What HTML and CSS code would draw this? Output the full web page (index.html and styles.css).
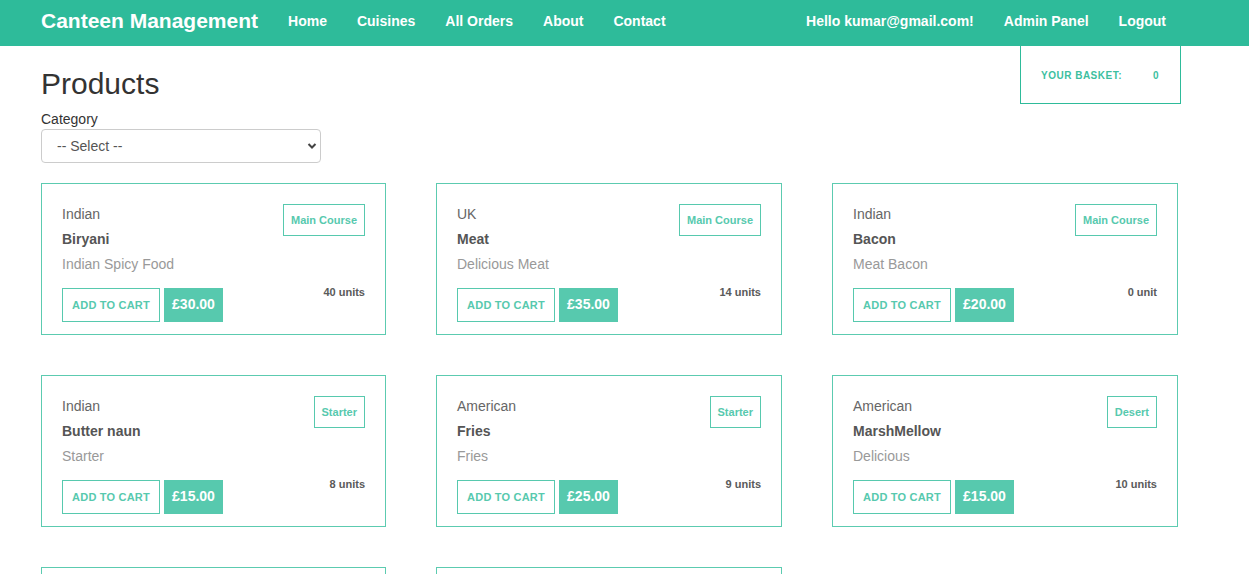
FILE: index.html
```html
<!DOCTYPE html>
<html lang="en">
<head>
<meta charset="utf-8">
<title>Canteen Management</title>
<link rel="stylesheet" href="styles.css">
</head>
<body>
<nav class="navbar">
  <div class="nav-inner">
    <a class="brand" href="#">Canteen Management</a>
    <ul class="nav-links">
      <li><a href="#">Home</a></li>
      <li><a href="#">Cuisines</a></li>
      <li><a href="#">All Orders</a></li>
      <li><a href="#">About</a></li>
      <li><a href="#">Contact</a></li>
    </ul>
    <ul class="nav-links nav-right">
      <li><a href="#">Hello kumar@gmail.com!</a></li>
      <li><a href="#">Admin Panel</a></li>
      <li><a href="#">Logout</a></li>
    </ul>
  </div>
</nav>

<main class="container">
  <div class="head-row">
    <div class="head-left">
      <h1 class="title">Products</h1>
      <label class="cat-label" for="cat">Category</label>
      <div class="select-wrap">
        <select id="cat" class="cat-select">
          <option>-- Select --</option>
        </select>
        <svg class="chev" width="10" height="8" viewBox="0 0 10 8"><path d="M1.5 2 L5 5.5 L8.5 2" fill="none" stroke="#444" stroke-width="2"/></svg>
      </div>
    </div>
    <div class="basket">
      <span>YOUR BASKET:</span>
      <span class="basket-count">0</span>
    </div>
  </div>

  <div class="grid">
    <div class="card">
      <div class="card-top">
        <div class="info">
          <div class="cuisine">Indian</div>
          <div class="name">Biryani</div>
          <div class="desc">Indian Spicy Food</div>
        </div>
        <span class="tag">Main Course</span>
      </div>
      <div class="card-bottom">
        <div class="actions">
          <button class="btn-cart">ADD TO CART</button>
          <span class="price">£30.00</span>
        </div>
        <span class="units">40 units</span>
      </div>
    </div>

    <div class="card">
      <div class="card-top">
        <div class="info">
          <div class="cuisine">UK</div>
          <div class="name">Meat</div>
          <div class="desc">Delicious Meat</div>
        </div>
        <span class="tag">Main Course</span>
      </div>
      <div class="card-bottom">
        <div class="actions">
          <button class="btn-cart">ADD TO CART</button>
          <span class="price">£35.00</span>
        </div>
        <span class="units">14 units</span>
      </div>
    </div>

    <div class="card">
      <div class="card-top">
        <div class="info">
          <div class="cuisine">Indian</div>
          <div class="name">Bacon</div>
          <div class="desc">Meat Bacon</div>
        </div>
        <span class="tag">Main Course</span>
      </div>
      <div class="card-bottom">
        <div class="actions">
          <button class="btn-cart">ADD TO CART</button>
          <span class="price">£20.00</span>
        </div>
        <span class="units">0 unit</span>
      </div>
    </div>

    <div class="card">
      <div class="card-top">
        <div class="info">
          <div class="cuisine">Indian</div>
          <div class="name">Butter naun</div>
          <div class="desc">Starter</div>
        </div>
        <span class="tag">Starter</span>
      </div>
      <div class="card-bottom">
        <div class="actions">
          <button class="btn-cart">ADD TO CART</button>
          <span class="price">£15.00</span>
        </div>
        <span class="units">8 units</span>
      </div>
    </div>

    <div class="card">
      <div class="card-top">
        <div class="info">
          <div class="cuisine">American</div>
          <div class="name">Fries</div>
          <div class="desc">Fries</div>
        </div>
        <span class="tag">Starter</span>
      </div>
      <div class="card-bottom">
        <div class="actions">
          <button class="btn-cart">ADD TO CART</button>
          <span class="price">£25.00</span>
        </div>
        <span class="units">9 units</span>
      </div>
    </div>

    <div class="card">
      <div class="card-top">
        <div class="info">
          <div class="cuisine">American</div>
          <div class="name">MarshMellow</div>
          <div class="desc">Delicious</div>
        </div>
        <span class="tag">Desert</span>
      </div>
      <div class="card-bottom">
        <div class="actions">
          <button class="btn-cart">ADD TO CART</button>
          <span class="price">£15.00</span>
        </div>
        <span class="units">10 units</span>
      </div>
    </div>

    <div class="card"></div>
    <div class="card"></div>
  </div>
</main>
</body>
</html>
```

FILE: styles.css
```css
* { box-sizing: border-box; }

body {
  margin: 0;
  font-family: "Liberation Sans", Arial, sans-serif;
  font-size: 14px;
  line-height: 20px;
  color: #333;
  background: #fff;
}

a { text-decoration: none; }

.navbar {
  background: #2ebb9a;
  height: 46px;
}

.nav-inner {
  display: flex;
  align-items: center;
  height: 46px;
  padding: 0 68px 0 41px;
}

.brand {
  color: #fff;
  font-size: 21px;
  font-weight: bold;
  line-height: 20px;
  margin-right: 15px;
  margin-top: -4px;
}

.nav-links {
  display: flex;
  list-style: none;
  margin: 0;
  padding: 0;
  margin-top: -5px;
}

.nav-links a {
  display: block;
  color: #fff;
  font-weight: bold;
  font-size: 14px;
  padding: 0 15px;
}

.nav-right {
  margin-left: auto;
}

.container {
  padding: 0 68px 0 41px;
}

.head-row {
  display: flex;
  justify-content: space-between;
  align-items: flex-start;
}

.title {
  font-size: 30px;
  font-weight: normal;
  line-height: 33px;
  margin: 21px 0 9px;
  color: #333;
}

.cat-label {
  display: block;
  font-size: 14px;
  line-height: 20px;
}

.select-wrap {
  position: relative;
  width: 280px;
}

.cat-select {
  appearance: none;
  -webkit-appearance: none;
  width: 280px;
  height: 34px;
  border: 1px solid #ccc;
  border-radius: 4px;
  background: #fff;
  font-family: "Liberation Sans", Arial, sans-serif;
  font-size: 14px;
  color: #555;
  padding: 0 15px;
  display: block;
}

.chev {
  position: absolute;
  right: 4px;
  top: 13px;
}

.basket {
  width: 161px;
  height: 58px;
  border: 1px solid #2ebb9a;
  border-top: none;
  display: flex;
  align-items: center;
  justify-content: space-between;
  padding: 2px 21px 0 20px;
  font-size: 10px;
  font-weight: bold;
  letter-spacing: 0.5px;
  color: #3dbf9f;
}

.grid {
  display: grid;
  grid-template-columns: 345px 346px 346px;
  column-gap: 50px;
  row-gap: 40px;
  margin-top: 20px;
}

.card {
  border: 1px solid #5ccbb0;
  height: 152px;
  padding: 20px 20px 12px;
  display: flex;
  flex-direction: column;
}

.card-top {
  display: flex;
  justify-content: space-between;
  align-items: flex-start;
}

.info div + div { margin-top: 5px; }

.cuisine { color: #666; }
.name { color: #555; font-weight: bold; }
.desc { color: #999; }

.tag {
  border: 1px solid #57c9ae;
  color: #57c9ae;
  font-size: 11px;
  font-weight: bold;
  height: 32px;
  line-height: 30px;
  padding: 0 7px;
}

.card-bottom {
  display: flex;
  justify-content: space-between;
  align-items: flex-start;
  margin-top: 14px;
}

.actions {
  display: flex;
  gap: 4px;
}

.btn-cart {
  height: 34px;
  width: 98px;
  border: 1px solid #57c9ae;
  background: #fff;
  color: #57c9ae;
  font-family: "Liberation Sans", Arial, sans-serif;
  font-size: 11px;
  font-weight: bold;
  letter-spacing: 0.2px;
  padding: 0;
}

.price {
  background: #57c9ae;
  color: #fff;
  font-weight: bold;
  font-size: 14px;
  height: 34px;
  line-height: 32px;
  width: 59px;
  text-align: center;
}

.units {
  font-size: 11px;
  font-weight: bold;
  color: #5a5a5a;
  line-height: 14px;
  margin-top: -3px;
}
```
